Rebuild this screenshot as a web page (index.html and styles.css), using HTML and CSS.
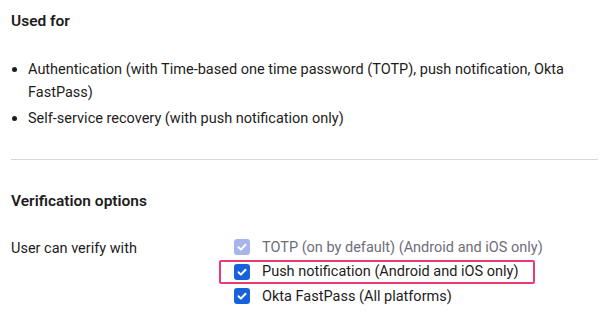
FILE: index.html
```html
<!DOCTYPE html>
<html lang="en">
<head>
    <meta charset="UTF-8">
    <meta name="viewport" content="width=device-width, initial-scale=1.0">
    <title>Authenticator settings</title>
    <link rel="stylesheet" href="styles.css">
</head>
<body>
    <div class="page">
        <section class="section">
            <h2 class="section-title">Used for</h2>
            <ul class="used-list">
                <li>Authentication (with Time-based one time password (TOTP), push notification, Okta FastPass)</li>
                <li>Self-service recovery (with push notification only)</li>
            </ul>
        </section>

        <hr class="divider">

        <section class="section">
            <h2 class="section-title">Verification options</h2>
            <div class="field-row">
                <div class="field-label">User can verify with</div>
                <div class="options">
                    <label class="option disabled">
                        <span class="checkbox">
                            <svg viewBox="0 0 16 16"><path d="M4.5 8.3l2.4 2.3 4.6-4.9" fill="none" stroke="#fff" stroke-width="2" stroke-linecap="round" stroke-linejoin="round"/></svg>
                        </span>
                        <span>TOTP (on by default) (Android and iOS only)</span>
                    </label>
                    <label class="option highlight">
                        <span class="checkbox">
                            <svg viewBox="0 0 16 16"><path d="M4.5 8.3l2.4 2.3 4.6-4.9" fill="none" stroke="#fff" stroke-width="2" stroke-linecap="round" stroke-linejoin="round"/></svg>
                        </span>
                        <span>Push notification (Android and iOS only)</span>
                    </label>
                    <label class="option">
                        <span class="checkbox">
                            <svg viewBox="0 0 16 16"><path d="M4.5 8.3l2.4 2.3 4.6-4.9" fill="none" stroke="#fff" stroke-width="2" stroke-linecap="round" stroke-linejoin="round"/></svg>
                        </span>
                        <span>Okta FastPass (All platforms)</span>
                    </label>
                </div>
            </div>
        </section>
    </div>
</body>
</html>
```

FILE: styles.css
```css
body {
    margin: 0;
    padding: 0;
    background: #fff;
    color: #1d1d21;
    font-family: Roboto, "Noto Sans", sans-serif;
    font-size: 14.5px;
    overflow: hidden;
}

.page {
    padding: 10px 4px 0 11px;
}

.section-title {
    margin: 0;
    font-size: 15.5px;
    line-height: 22px;
    font-weight: 600;
}

.used-list {
    margin: 26px 0 0;
    padding: 0 0 0 17px;
    line-height: 23px;
}

.used-list li {
    margin-bottom: 3px;
    padding-left: 0;
}

.used-list li::marker {
    font-size: 15px;
}

.divider {
    border: none;
    border-top: 1px solid #d7d7dc;
    margin: 29px 0 30px;
}

.field-row {
    display: grid;
    grid-template-columns: 208px auto;
    margin-top: 23px;
}

.field-label {
    line-height: 22px;
    padding-top: 3px;
}

.options {
    display: flex;
    flex-direction: column;
    align-items: flex-start;
}

.option {
    box-sizing: border-box;
    display: flex;
    align-items: center;
    gap: 12px;
    height: 24.5px;
    padding: 0 15px 0 13px;
    border: 2px solid transparent;
    border-radius: 2px;
}

.option.highlight {
    border-color: #eb3a6e;
}

.checkbox {
    width: 16px;
    height: 16px;
    border-radius: 3px;
    background: #1662dd;
    display: flex;
}

.checkbox svg {
    width: 16px;
    height: 16px;
}

.option.disabled {
    color: #6e6e78;
}

.option.disabled .checkbox {
    background: #a7b4ee;
}
```
